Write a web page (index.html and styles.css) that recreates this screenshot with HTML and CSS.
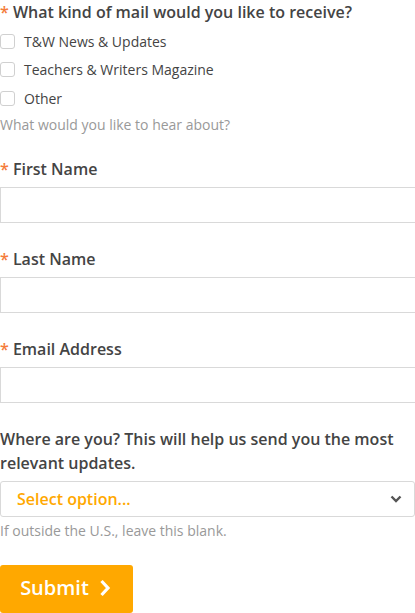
FILE: index.html
```html
<!DOCTYPE html>
<html>
<head>
<meta charset="utf-8">
<link rel="stylesheet" href="styles.css">
</head>
<body>
<form class="form">
  <div class="group">
    <div class="label"><span class="req">*</span> What kind of mail would you like to receive?</div>
    <div class="checks">
      <label class="check"><span class="box"></span>T&amp;W News &amp; Updates</label>
      <label class="check"><span class="box"></span>Teachers &amp; Writers Magazine</label>
      <label class="check"><span class="box"></span>Other</label>
    </div>
    <div class="hint">What would you like to hear about?</div>
  </div>

  <div class="field first">
    <div class="label"><span class="req">*</span> First Name</div>
    <div class="input"></div>
  </div>
  <div class="field">
    <div class="label"><span class="req">*</span> Last Name</div>
    <div class="input"></div>
  </div>
  <div class="field">
    <div class="label"><span class="req">*</span> Email Address</div>
    <div class="input"></div>
  </div>
  <div class="field">
    <div class="label">Where are you? This will help us send you the most relevant updates.</div>
    <div class="select">
      <span>Select option...</span>
      <svg width="12" height="8" viewBox="0 0 12 8"><path d="M1.5 1.5 L6 6 L10.5 1.5" fill="none" stroke="#555" stroke-width="2.4"/></svg>
    </div>
    <div class="hint small">If outside the U.S., leave this blank.</div>
  </div>
  <button type="button" class="submit">Submit <svg width="12" height="18" viewBox="0 0 12 18"><path d="M2.5 2 L9 9 L2.5 16" fill="none" stroke="#fff" stroke-width="3.2"/></svg></button>
</form>
</body>
</html>
```

FILE: styles.css
```css
html, body {
  margin: 0;
  padding: 0;
  background: #fff;
  overflow: hidden;
}
body {
  font-family: "Open Sans", "Liberation Sans", sans-serif;
  color: #444;
}
.form {
  display: flex;
  flex-direction: column;
}
.label {
  font-size: 16px;
  font-weight: 600;
  line-height: 24px;
  color: #444;
}
.req {
  color: #f47b3a;
}
.checks {
  margin-top: 3px;
  display: flex;
  flex-direction: column;
}
.check {
  display: flex;
  align-items: center;
  height: 28.5px;
  font-size: 14px;
  color: #444;
}
.box {
  width: 13px;
  height: 13px;
  border: 1px solid #d0d0d0;
  border-radius: 3px;
  margin-right: 9px;
  box-sizing: content-box;
}
.hint {
  font-size: 14px;
  line-height: 20px;
  color: #999;
  margin-top: 2px;
}
.hint.small {
  margin-top: 4px;
}
.field {
  margin-top: 24px;
}
.field.first {
  margin-top: 22px;
}
.input {
  margin-top: 6px;
  height: 36px;
  box-sizing: border-box;
  border: 1px solid #d9d9d9;
  width: calc(100% + 20px);
}
.select {
  margin-top: 6px;
  height: 36px;
  box-sizing: border-box;
  border: 1px solid #d9d9d9;
  border-radius: 3px;
  display: flex;
  align-items: center;
  justify-content: space-between;
  padding: 0 12px 0 16px;
  font-size: 16px;
  font-weight: 600;
  color: #ffa800;
}
.submit {
  margin-top: 24px;
  align-self: flex-start;
  width: 133px;
  height: 48px;
  border: none;
  border-radius: 3px;
  background: #ffa800;
  color: #fff;
  font-family: "Open Sans", "Liberation Sans", sans-serif;
  font-size: 20px;
  font-weight: 600;
  display: flex;
  align-items: center;
  justify-content: center;
  gap: 10px;
  padding: 0 2px 2px 0;
}
```
